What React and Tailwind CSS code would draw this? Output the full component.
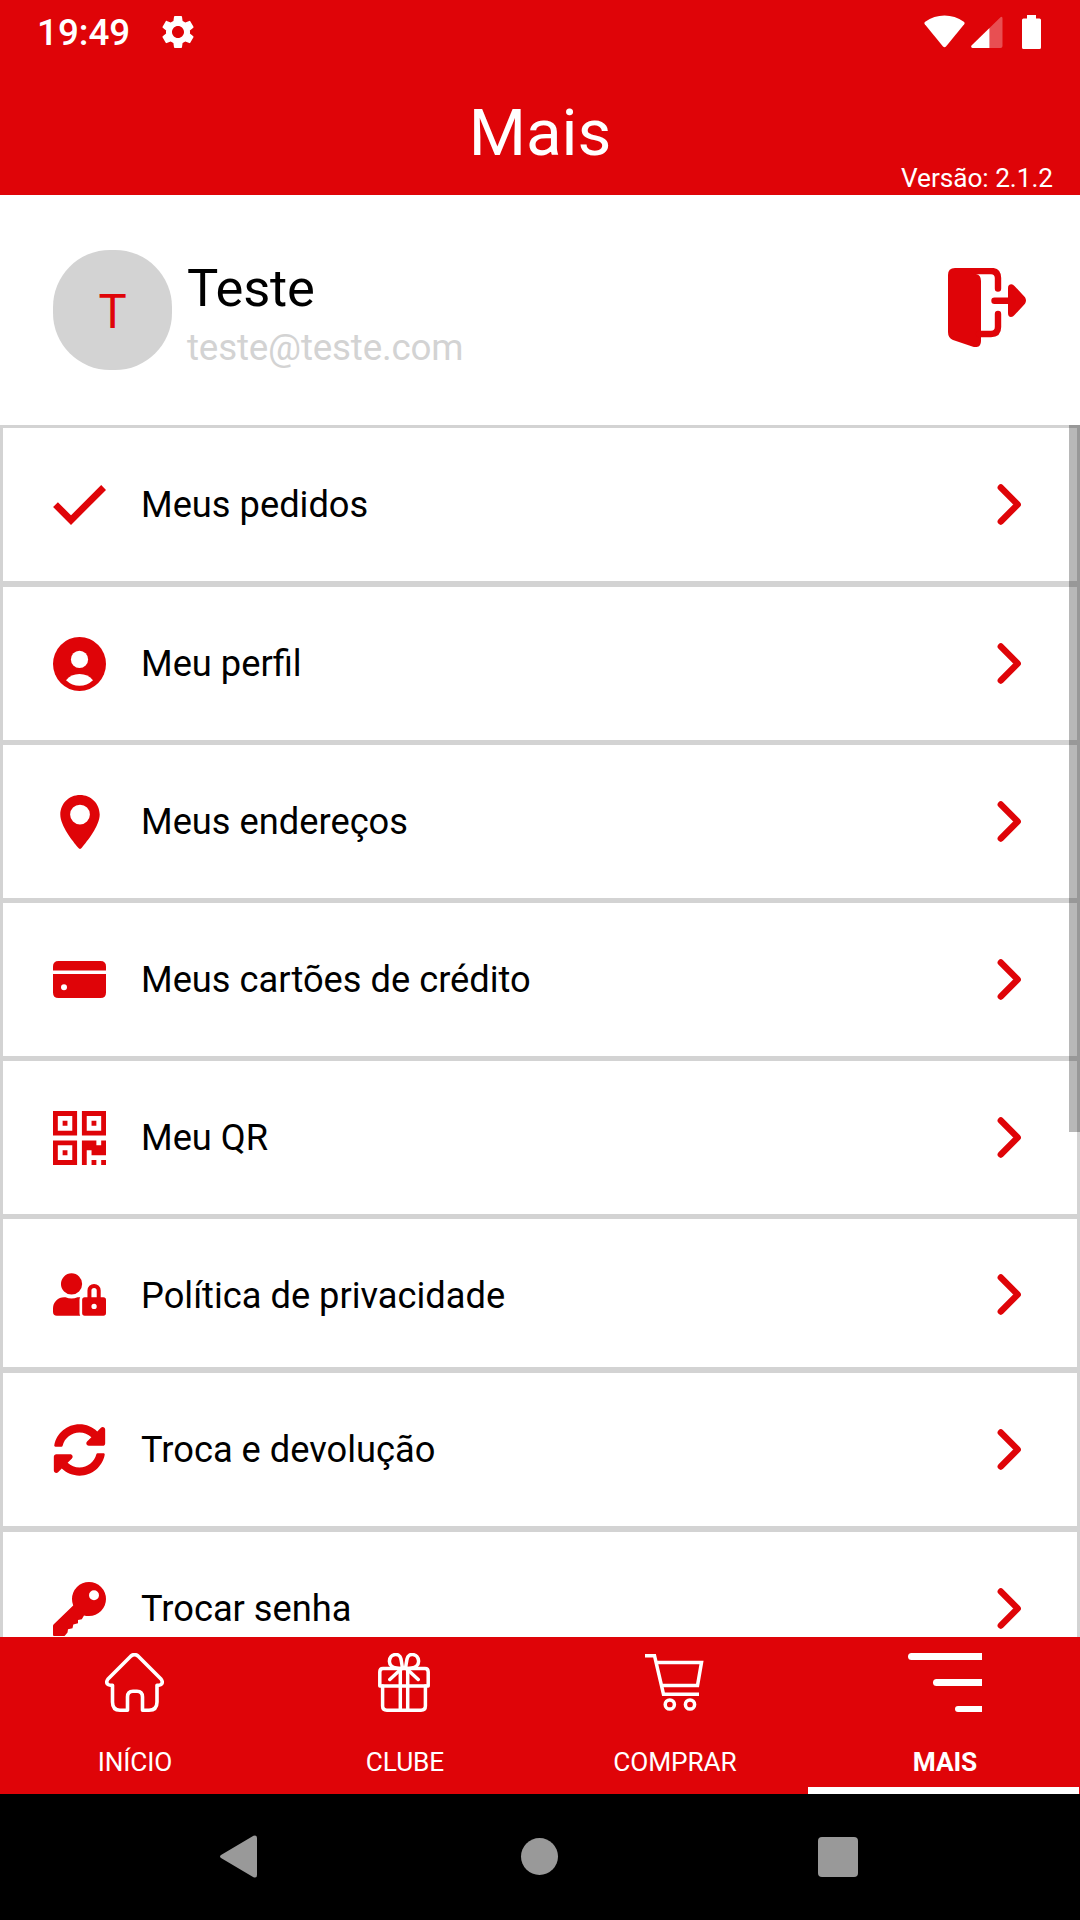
import React from "react";
import { FaUserLock, FaSyncAlt } from "react-icons/fa";
import { MdSettings } from "react-icons/md";

const CheckIcon = () => (
  <svg className="h-10 w-[53px]" viewBox="0 0 53 40" fill="none" stroke="currentColor" strokeWidth="6.8">
    <path d="M2.500 19.600L18 35.100L50.600 2.500" />
  </svg>
);

const ProfileIcon = () => (
  <svg className="h-[54px] w-[53px]" viewBox="0 0 53 54" fill="currentColor" preserveAspectRatio="none">
    <ellipse cx="26.5" cy="27" rx="26.5" ry="27" />
    <circle cx="26.5" cy="22.4" r="8.6" fill="#fff" />
    <path d="M13 43.2Q18 37 26.5 37T40 43.2Q34 48.8 26.5 48.8T13 43.2Z" fill="#fff" />
  </svg>
);

const PinIcon = () => (
  <svg className="h-[54px] w-10" viewBox="0 0 40 54" fill="currentColor" fillRule="evenodd">
    <path d="M20 0C9 0 .3 8.7.3 19.6C.3 31 13 46.500 18 52.600Q20 55.200 22 52.600C27 46.500 39.700 31 39.700 19.600C39.700 8.700 31 0 20 0ZM20 9.700a9.900 9.900 0 1 1 0 19.800a9.900 9.900 0 0 1 0-19.800Z" />
  </svg>
);

const CardIcon = () => (
  <svg className="h-[37px] w-[53px]" viewBox="0 0 53 37" fill="currentColor">
    <path d="M5.500 0H47.500Q53 0 53 5.500V9.500H0V5.500Q0 0 5.500 0Z" />
    <path fillRule="evenodd" d="M0 13H53V31.500Q53 37 47.500 37H5.500Q0 37 0 31.500ZM11 23.300a3 3 0 1 0 0 6a3 3 0 0 0 0-6Z" />
  </svg>
);

const QrIcon = () => (
  <svg className="h-[54px] w-[53px]" viewBox="0 0 11 11" fill="currentColor" fillRule="evenodd" preserveAspectRatio="none">
    <path d="M0 0H5V5H0ZM1 1V4H4V1ZM2 2H3V3H2Z" />
    <path d="M6 0H11V5H6ZM7 1V4H10V1ZM8 2H9V3H8Z" />
    <path d="M0 6H5V11H0ZM1 7V10H4V7ZM2 8H3V9H2Z" />
    <path d="M6 6H9V7H10V6H11V9H8V8H7V11H6ZM8 10H9V11H8ZM10 10H11V11H10Z" />
  </svg>
);

const KeyIcon = () => (
  <svg className="h-[54px] w-[53px]" viewBox="0 0 53 54" fill="currentColor" fillRule="evenodd">
    <path d="M36 0A17 17 0 0 1 53 17A17 17 0 0 1 36 34Q33 34 31 33.500L28.800 37.300L25 38V41.300L20.300 42.500L19.500 46.300L15 47.300L14.500 50.500L12 53.500Q11.500 54 10.500 54H1Q0 54 0 53V44Q0 43 .8 42.200L20.200 23.500Q19 20.500 19 17A17 17 0 0 1 36 0ZM41 8.200a5 5 0 1 0 0 10a5 5 0 0 0 0-10Z" />
  </svg>
);

const Chevron = () => (
  <svg className="mr-[55px] h-[41px] w-[25px] text-[#df0408]" viewBox="0 0 25 41" fill="none" stroke="currentColor" strokeWidth="6.4" strokeLinecap="round" strokeLinejoin="round">
    <path d="M3.800 3.500L20.700 20.500L3.800 37.500" />
  </svg>
);

const LogoutIcon = () => (
  <svg className="h-[79px] w-[78px]" viewBox="0 0 78 79" fill="currentColor">
    <path d="M7 0H28V6Q33 7 33 13V73Q33 80.500 25 78.700L5 72Q0 70 0 64V7Q0 0 7 0Z" />
    <path d="M26 3H43Q50 3 50 10V20.500M50 46V59Q50 66 43 66H31M46.500 32.700H62" fill="none" stroke="currentColor" strokeWidth="6.400" strokeLinecap="round" />
    <path d="M60 20Q60 16.300 63.500 16.300Q65 16.300 66.500 18L77 29.200Q79 32.700 77 35.700L66.500 47Q65 49 63 49Q60 49 60 45Z" />
  </svg>
);

const HomeIcon = () => (
  <svg className="mr-[2px] h-[59px] w-[59px]" viewBox="0 0 59 59" fill="none" stroke="currentColor" strokeWidth="3.600" strokeLinejoin="round">
    <path d="M26 3Q29.500 .2 33 3L56 26Q58.200 29 56.500 31Q55.500 32.300 52 32.300V49Q52 57.200 44 57.200H37.500V44Q37.500 38.200 32 38.200H28Q22.500 38.200 22.500 44V57.200H15Q7.500 57.200 7.500 49V32.300Q3.500 32.300 2.500 31Q.8 29 3 26Z" />
  </svg>
);

const GiftIcon = () => (
  <svg className="mr-[2px] h-[59px] w-[52px]" viewBox="0 0 52 59" fill="none" stroke="currentColor" strokeWidth="3.500" strokeLinecap="round" strokeLinejoin="round">
    <path d="M5 15.500H47Q50.200 15.500 50.200 19V33H1.800V19Q1.800 15.500 5 15.500Z" />
    <path d="M4.600 33V53Q4.600 57.200 9 57.200H43Q47.400 57.200 47.400 53V33M22.300 16V57M29.700 16V57" />
    <path d="M24.500 15.500C13 15.500 11 11.500 11.500 7.500C12.500 0 21.500 0 22.700 5C23.500 8 24 12 24.500 15.500M27.500 15.500C39 15.500 41 11.500 40.500 7.500C39.500 0 30.500 0 29.300 5C28.500 8 28 12 27.500 15.500M22 17L11.800 26.500M30 17L40.200 26.500" />
  </svg>
);

const CartIcon = () => (
  <svg className="mr-[1px] h-[59px] w-[59px]" viewBox="0 -1 59 59" fill="none" stroke="currentColor" strokeWidth="3.500">
    <path d="M0 1.700H9.500L18.500 40.200H54M11.500 8.500H56.500L52.500 31.500H16.500" />
    <circle cx="24.800" cy="50.500" r="4.600" />
    <circle cx="45" cy="50.500" r="4.600" />
  </svg>
);

const MoreIcon = () => (
  <div className="flex h-[59px] w-[74px] flex-col items-end justify-between">
    <span className="h-[6.500px] w-[74px] rounded-l-full rounded-r-[2px] bg-white" />
    <span className="h-[6.500px] w-[49px] rounded-l-full rounded-r-[2px] bg-white" />
    <span className="h-[6.500px] w-[27px] rounded-l-full rounded-r-[2px] bg-white" />
  </div>
);

const rows = [
  { label: "Meus pedidos", icon: <CheckIcon />, box: "border-t-[3px] h-[156px]" },
  { label: "Meu perfil", icon: <ProfileIcon />, box: "border-t-[6px] h-[159px]" },
  { label: "Meus endereços", icon: <PinIcon />, box: "border-t-[5px] h-[158px]" },
  { label: "Meus cartões de crédito", icon: <CardIcon />, box: "border-t-[5px] h-[158px]" },
  { label: "Meu QR", icon: <QrIcon />, box: "border-t-[5px] h-[158px]" },
  { label: "Política de privacidade", icon: <FaUserLock className="h-[43px] w-[53px]" />, box: "border-t-[5px] h-[153px] pt-[3px]", labelBox: "pt-[2px]" },
  { label: "Troca e devolução", icon: <FaSyncAlt className="size-[54px]" />, box: "border-t-[6px] h-[159px]" },
  { label: "Trocar senha", icon: <KeyIcon />, box: "border-t-[6px] h-[159px]" },
];

const tabs = [
  { label: "INÍCIO", icon: <HomeIcon /> },
  { label: "CLUBE", icon: <GiftIcon /> },
  { label: "COMPRAR", icon: <CartIcon /> },
  { label: "MAIS", icon: <MoreIcon />, active: true },
];

function StatusBar() {
  return (
    <div className="flex h-[63px] items-center justify-between pl-[37px] pr-[39px]">
      <div className="flex items-center gap-[28px]">
        <span className="pt-[3px] text-[36.750px] leading-[60px] font-medium">19:49</span>
        <MdSettings className="size-10" />
      </div>
      <div className="flex items-center">
        <svg className="h-[34px] w-[41px]" viewBox="0 0 41 34" fill="currentColor">
          <path d="M.8 9.200Q-.3 7.800 1.200 6.700Q10 .5 20.500 .5T39.800 6.700Q41.300 7.800 40.200 9.200L22 31.500Q20.500 33 19 31.500Z" />
        </svg>
        <svg className="ml-[6px] h-[34px] w-8" viewBox="0 0 32 34" fill="currentColor">
          <path d="M18.500 13V33H1.500Q-.5 32.500 .5 30.500Z" />
          <path d="M18.500 13L29.500 2.300Q31.500 1 31.500 3.500V31Q31.500 33 29.500 33H18.500Z" opacity=".3" />
        </svg>
        <svg className="ml-[19px] h-[34px] w-[19px]" viewBox="0 0 19 34" fill="currentColor">
          <path d="M5 0H14V3.500H17.500Q19 3.500 19 5V32.500Q19 34 17.500 34H1.500Q0 34 0 32.500V5Q0 3.500 1.500 3.500H5Z" />
        </svg>
      </div>
    </div>
  );
}

export default function App() {
  return (
    <div className="flex h-[1920px] w-[1080px] flex-col overflow-hidden bg-white font-[Roboto,sans-serif] text-black">
      <header className="flex h-[195px] shrink-0 flex-col bg-[#df0408] text-white">
        <StatusBar />
        <h1 className="mt-[31px] text-center text-[65.600px] leading-[78px] font-normal">Mais</h1>
        <p className="-mt-[10px] pr-[27px] text-right text-[26.250px] leading-[32px] tracking-[-0.05px]">Versão: 2.1.2</p>
      </header>

      <section className="flex h-[230px] shrink-0 items-center pr-[54px] pl-[53px]">
        <div className="flex h-[120px] w-[119px] items-center justify-center rounded-[57px] bg-[#d3d3d3] pt-[5px] text-[47.250px] leading-none text-[#df0408]">
          T
        </div>
        <div className="ml-[15px] flex-1 pt-[7px]">
          <p className="text-[52.500px] leading-[62px] tracking-[-0.2px]">Teste</p>
          <p className="mt-[6px] text-[36.750px] leading-[46px] tracking-[-0.18px] text-[#d3d3d3]">teste@teste.com</p>
        </div>
        <div className="-mt-[6px] text-[#df0408]">
          <LogoutIcon />
        </div>
      </section>

      <div className="relative h-[1212px] shrink-0 overflow-hidden">
        <ul>
          {rows.map((row) => (
            <li key={row.label} className={`flex items-center border-x-[3px] border-[#d3d3d3] ${row.box}`}>
              <div className="ml-[50px] flex w-[53px] justify-center text-[#df0408]">{row.icon}</div>
              <span className={`ml-[35px] flex-1 text-[36.250px] leading-[44px] ${row.labelBox ?? ""}`}>{row.label}</span>
              <Chevron />
            </li>
          ))}
        </ul>
        <div className="absolute top-0 right-0 h-[707px] w-[11px] bg-black/28" />
      </div>

      <nav className="grid h-[157px] shrink-0 grid-cols-4 bg-[#df0408] text-white">
        {tabs.map((tab) => (
          <div key={tab.label} className="flex flex-col items-center pt-4">
            {tab.icon}
            <span className={`mt-[34px] text-[26.250px] leading-[32px] tracking-[-0.1px] ${tab.active ? "font-bold" : ""}`}>{tab.label}</span>
            {tab.active && <span className="mt-auto -ml-[3px] h-[7px] w-[271px] bg-white" />}
          </div>
        ))}
      </nav>

      <div className="flex flex-1 items-center bg-black pb-px pl-[219px] text-[#999]">
        <svg className="h-[43px] w-[38px]" viewBox="0 0 38 43" fill="currentColor">
          <path d="M2 20L34.500 .8Q38 -.5 38 3V40Q38 43.500 34.500 42.200L2 23Q0 21.500 2 20Z" />
        </svg>
        <span className="ml-[264px] size-[37px] rounded-full bg-[#999]" />
        <span className="ml-[260px] size-10 rounded-[4px] bg-[#999]" />
      </div>
    </div>
  );
}
